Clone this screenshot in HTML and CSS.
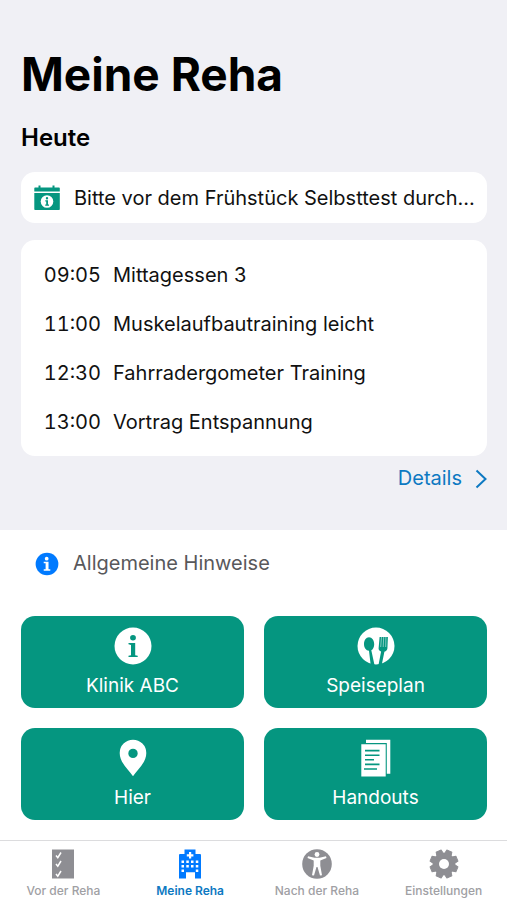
FILE: index.html
```html
<!DOCTYPE html>
<html lang="de">
<head>
<meta charset="utf-8">
<meta name="viewport" content="width=device-width, initial-scale=1">
<title>Meine Reha</title>
<link rel="stylesheet" href="styles.css">
</head>
<body>
<div class="app">
  <header class="today">
    <h1 class="title">Meine Reha</h1>
    <h2 class="subtitle">Heute</h2>
    <a class="card notice" href="#hinweis">
      <svg width="26" height="26" viewBox="0 0 26 26" aria-hidden="true">
        <path fill="#059680" d="M1 2.500h3.500V.500h2v2h12v-2h2v2H25a.8.8 0 0 1 .8.8v3.300H.3V3.300A.8.8 0 0 1 1 2.500z"/>
        <path fill="#059680" d="M.3 8h25.500v16.200a.8.8 0 0 1-.8.8H1.100a.8.8 0 0 1-.8-.8z"/>
        <circle cx="13" cy="16.500" r="6.300" fill="#fff"/>
        <path fill="#059680" d="M13 12a1.200 1.200 0 1 1 0 2.400 1.200 1.200 0 0 1 0-2.400zM11.300 15.300h2.700v4.200h1v1.200h-3.800v-1.200h1v-3h-.9z"/>
      </svg>
      <span class="notice-text">Bitte vor dem Frühstück Selbsttest durch...</span>
    </a>
    <ul class="card schedule">
      <li class="entry"><time class="time">09:05</time><span>Mittagessen 3</span></li>
      <li class="entry"><time class="time">11:00</time><span>Muskelaufbautraining leicht</span></li>
      <li class="entry"><time class="time">12:30</time><span>Fahrradergometer Training</span></li>
      <li class="entry"><time class="time">13:00</time><span>Vortrag Entspannung</span></li>
    </ul>
    <a class="details" href="#details">Details
      <svg width="12" height="20" viewBox="0 0 12 20" aria-hidden="true"><path d="M1.500 1.500 10.500 10l-9 8.500" fill="none" stroke="currentColor" stroke-width="2"/></svg>
    </a>
  </header>

  <main class="content">
    <a class="hint" href="#hinweise">
      <svg width="24" height="24" viewBox="0 0 38 38" aria-hidden="true">
        <circle cx="19" cy="19" r="18" fill="#007aff"/>
        <path fill="#fff" d="M18.500 7.500a3 3 0 1 1 0 6 3 3 0 0 1 0-6zM13.800 15.500h7.600v11.700h2.800v2.500H13.800v-2.500h3V18h-3z"/>
      </svg>
      <span>Allgemeine Hinweise</span>
    </a>
    <div class="tiles">
      <button class="tile" type="button">
        <svg width="38" height="38" viewBox="0 0 38 38" aria-hidden="true">
          <circle cx="19" cy="19" r="18.500" fill="#fff"/>
          <path fill="#059680" d="M19 8a2.900 2.700 0 1 1 0 5.400A2.900 2.700 0 0 1 19 8zM14.500 16h6.700v12.200l2.500.6v1.200h-9.200v-1.200l2.500-.6V18l-2.500-.7z"/>
        </svg>
        <span>Klinik ABC</span>
      </button>
      <button class="tile" type="button">
        <svg width="38" height="38" viewBox="0 0 38 38" aria-hidden="true">
          <circle cx="19" cy="19" r="18.500" fill="#fff"/>
          <g fill="#059680">
            <path d="M12 10.200c3 0 5.200 3.200 5.200 7 0 3-1.200 5.200-2.900 6l3.300 15.300-3.900-.6-1.700-14.200c-2.900-.2-5-2.900-5-6.500 0-3.800 2-7 5-7z"/>
            <path d="M22.600 10h8.300l-.5 11.600c-.1 1.500-1.300 2.700-3 3.100l-2.700 13.200-3.300.5 2.700-13.900c-1.700-.6-2.600-1.900-2.500-3.300z"/>
          </g>
          <path d="m24.500 10-.8 10M26.700 10l-.5 10M28.900 10l-.2 10" stroke="#fff" stroke-width=".5"/>
        </svg>
        <span>Speiseplan</span>
      </button>
      <button class="tile" type="button">
        <svg width="38" height="38" viewBox="0 0 38 38" aria-hidden="true">
          <path fill="#fff" fill-rule="evenodd" d="M19 .7A13.300 13.300 0 0 0 5.700 14C5.700 23.500 14 30 19 37.300 24 30 32.300 23.500 32.300 14A13.300 13.300 0 0 0 19 .7zm0 9a4.700 4.700 0 1 1 0 9.400 4.700 4.700 0 0 1 0-9.400z"/>
        </svg>
        <span>Hier</span>
      </button>
      <button class="tile" type="button">
        <svg width="38" height="38" viewBox="0 0 38 38" aria-hidden="true">
          <path fill="#fff" d="M9 .7h24.300v34h-3.500V4H9zM4.300 5.300h24.400v32.200H4.300z"/>
          <path d="M8 11.600h14.500M8 16.200h14.500M8 20.800h9M8 25.400h14.500M7 30h13" stroke="#059680" stroke-width="1.600"/>
        </svg>
        <span>Handouts</span>
      </button>
    </div>
  </main>

  <nav class="tabs" aria-label="Hauptnavigation">
    <a class="tab" href="#vor">
      <svg width="30" height="30" viewBox="0 0 30 30" aria-hidden="true">
        <path fill="#8e8e93" d="M4 .5h22v29H4z"/>
        <path d="m8 6.500 1.800 2.200L13 3.500M8 15l1.800 2.200L13 12M8 25l1.800 2.200L13 22" fill="none" stroke="#fff" stroke-width="1.500"/>
      </svg>
      <span>Vor der Reha</span>
    </a>
    <a class="tab tab-active" href="#meine" aria-current="page">
      <svg width="30" height="30" viewBox="0 0 30 30" aria-hidden="true">
        <path fill="#007aff" d="M9.500.5h11V5H25a1 1 0 0 1 1 1v23.500h-6v-6.200h-9v6.200H4V6a1 1 0 0 1 1-1h4.500z"/>
        <path fill="#fff" d="M14 3h2.200v2.200h2.200v2.200h-2.200v2.200H14V7.400h-2.200V5.200H14zM6.500 11.500H9V14H6.500zm4.800 0h2.500V14h-2.500zm4.700 0h2.500V14H16zm4.800 0h2.500V14h-2.500zM6.500 16H9v2.500H6.500zm4.800 0h2.500v2.500h-2.500zm4.700 0h2.500v2.500H16zm4.800 0h2.500v2.500h-2.500zM6.500 20.500H9V23H6.500zm14.300 0h2.500V23h-2.500z"/>
      </svg>
      <span>Meine Reha</span>
    </a>
    <a class="tab" href="#nach">
      <svg width="30" height="30" viewBox="0 0 30 30" aria-hidden="true">
        <circle cx="15" cy="15" r="14.800" fill="#8e8e93"/>
        <circle cx="15" cy="5.500" r="2.400" fill="#fff"/>
        <path fill="#fff" d="m6 7.200 6.500 1.600h5L24 7.200l.5 1.700-6.200 2.500v5.300l1.700 9.500-2 .4L15.500 18h-1L12 26.600l-2-.4 1.700-9.500v-5.300L5.500 8.900z"/>
      </svg>
      <span>Nach der Reha</span>
    </a>
    <a class="tab" href="#einstellungen">
      <svg width="30" height="30" viewBox="0 0 30 30" aria-hidden="true">
        <g fill="#8e8e93" stroke="#8e8e93" stroke-width="1" stroke-linejoin="round">
          <circle cx="15" cy="15" r="10.800"/>
          <path d="M11.500 5 12.300 1h5.400l.8 4v20l-.8 4h-5.400l-.8-4z" transform="rotate(22.500 15 15)"/>
          <path d="M11.500 5 12.300 1h5.400l.8 4v20l-.8 4h-5.400l-.8-4z" transform="rotate(67.500 15 15)"/>
          <path d="M11.500 5 12.300 1h5.400l.8 4v20l-.8 4h-5.400l-.8-4z" transform="rotate(112.500 15 15)"/>
          <path d="M11.500 5 12.300 1h5.400l.8 4v20l-.8 4h-5.400l-.8-4z" transform="rotate(157.500 15 15)"/>
        </g>
        <circle cx="15" cy="15" r="5" fill="#fff"/>
      </svg>
      <span>Einstellungen</span>
    </a>
  </nav>
</div>
</body>
</html>
```
FILE: styles.css
```css
* {
  box-sizing: border-box;
}

body {
  margin: 0;
  background: #fff;
  color: #111;
  font-family: Inter, "Liberation Sans", sans-serif;
  font-size: 20px;
  line-height: 25px;
}

a {
  color: inherit;
  text-decoration: none;
}

svg {
  display: block;
  flex: none;
}

.app {
  display: flex;
  flex-direction: column;
  min-height: 100vh;
}

.today {
  display: flex;
  flex-direction: column;
  padding: 44px 20px 39px 21px;
  background: #f0f0f5;
}

.title {
  margin: 0;
  color: #000;
  font-size: 46px;
  line-height: 60px;
  font-weight: 700;
}

.subtitle {
  margin: 18px 0;
  color: #000;
  font-size: 24px;
  line-height: 32px;
  font-weight: 600;
}

.card {
  border-radius: 14px;
  background: #fff;
}

.notice {
  display: flex;
  align-items: center;
  gap: 14px;
  padding: 13px 10px 12px 13px;
}

.notice-text {
  white-space: nowrap;
}

.schedule {
  display: grid;
  gap: 24px;
  margin: 17px 0 0;
  padding: 23px 24px 21px 22px;
  list-style: none;
}

.entry {
  display: flex;
  gap: 12px;
}

.time {
  width: 58px;
  text-align: right;
  font-variant-numeric: tabular-nums;
}

.details {
  display: flex;
  align-items: center;
  align-self: flex-end;
  gap: 13px;
  margin-top: 10px;
  color: #0d79c2;
}

.content {
  flex: 1;
  padding: 21px 20px 20px 21px;
}

.hint {
  display: flex;
  align-items: center;
  gap: 14px;
  padding-left: 14px;
  color: #58585b;
}

.tiles {
  display: grid;
  grid-template-columns: 1fr 1fr;
  gap: 20px;
  margin-top: 40px;
}

.tile {
  display: flex;
  flex-direction: column;
  align-items: center;
  gap: 8px;
  padding: 11px 8px 10px;
  border: 0;
  border-radius: 14px;
  background: #059680;
  color: #fff;
  font: inherit;
  font-size: 19px;
}

.tabs {
  display: grid;
  grid-template-columns: repeat(4, 1fr);
  padding: 8px 0 1px;
  border-top: 1px solid #dcdcde;
}

.tab {
  display: flex;
  flex-direction: column;
  align-items: center;
  gap: 4px;
  color: #a0a0a4;
  font-size: 12px;
  line-height: 16px;
  font-weight: 500;
}

.tab-active {
  color: #0d79c2;
  font-weight: 600;
}
```
